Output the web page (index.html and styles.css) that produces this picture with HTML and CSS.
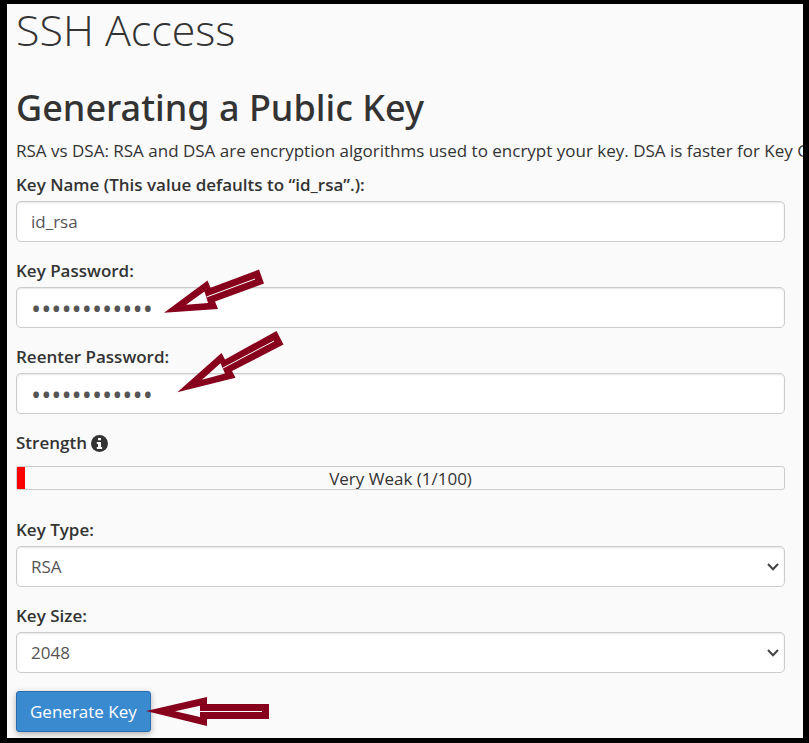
FILE: index.html
```html
<!DOCTYPE html>
<html lang="en">
<head>
<meta charset="utf-8">
<title>SSH Access</title>
<link rel="stylesheet" href="styles.css">
</head>
<body>
<main class="page">
  <h1 class="page-title">SSH Access</h1>
  <h2 class="section-title">Generating a Public Key</h2>
  <p class="intro">RSA vs DSA: RSA and DSA are encryption algorithms used to encrypt your key. DSA is faster for Key Ge</p>
  <form class="key-form">
    <div class="field">
      <label for="key-name">Key Name (This value defaults to “id_rsa”.):</label>
      <input class="control" id="key-name" type="text" value="id_rsa">
    </div>
    <div class="field">
      <label for="key-pass">Key Password:</label>
      <input class="control password" id="key-pass" type="password" value="abcdefghijkl">
      <svg class="arrow arrow-pass" viewBox="164 269 101 44" width="101" height="44" aria-hidden="true">
        <path fill-rule="evenodd" d="M164 312.7 207.5 280.5 210.5 287.8 259 269.5 264 283.5 215 301.5 218 309ZM186 304.8 208 303 204.5 291.5Z"/>
        <path class="slit" d="M206.5 297 255 279"/>
      </svg>
    </div>
    <div class="field">
      <label for="key-pass2">Reenter Password:</label>
      <input class="control password" id="key-pass2" type="password" value="abcdefghijkl">
      <svg class="arrow arrow-repeat" viewBox="177 331 107 62" width="107" height="62" aria-hidden="true">
        <path fill-rule="evenodd" d="M177.3 392.3 221.5 353 225 359.5 276.5 331 283.5 344.5 232 371 235.5 377.7ZM202 379.7 225 373.5 220.5 363.3Z"/>
        <path class="slit" d="M223 368 274 341"/>
      </svg>
    </div>
    <div class="field strength">
      <div class="strength-label">Strength
        <svg class="info" viewBox="0 0 17 17" width="17" height="17" aria-hidden="true">
          <circle cx="8.5" cy="8.5" r="8.5"/>
          <path d="M7 3h3v2.300H7zM5.800 7H10v5h1.200v2H5.800v-2H7V9H5.800z"/>
        </svg>
      </div>
      <div class="meter"><div class="meter-fill"></div><span>Very Weak (1/100)</span></div>
    </div>
    <div class="field">
      <label for="key-type">Key Type:</label>
      <div class="select-wrap">
        <select class="control" id="key-type"><option>RSA</option><option>DSA</option></select>
        <svg class="chevron" viewBox="0 0 12 8" width="12" height="8" aria-hidden="true"><path d="M1 1 6 6.300 11 1"/></svg>
      </div>
    </div>
    <div class="field">
      <label for="key-size">Key Size:</label>
      <div class="select-wrap">
        <select class="control" id="key-size"><option>2048</option><option>4096</option></select>
        <svg class="chevron" viewBox="0 0 12 8" width="12" height="8" aria-hidden="true"><path d="M1 1 6 6.300 11 1"/></svg>
      </div>
    </div>
    <div class="actions">
      <button class="submit" type="button">Generate Key</button>
      <svg class="arrow arrow-submit" viewBox="146 697 123 29" width="123" height="29" aria-hidden="true">
        <path fill-rule="evenodd" d="M146 711 207 697V704H269V719H207V726ZM175 711.300 200 717V705.700Z"/>
        <path class="slit" d="M200 711.500H262"/>
      </svg>
    </div>
  </form>
</main>
</body>
</html>
```
FILE: styles.css
```css
* {
  box-sizing: border-box;
}

body {
  margin: 0;
  padding: 4px 6px 5px 7px;
  background: #000;
  color: #333;
  font: 17px/24px "Open Sans", "Noto Sans", sans-serif;
}

.page {
  padding: 0 18px 6px 9px;
  background: #fafafa;
  overflow: hidden;
}

.page-title {
  margin: 0 0 28px;
  font-size: 43px;
  line-height: 52px;
  font-weight: 300;
}

.section-title {
  margin: 0 0 7px;
  font-family: "Noto Sans", "Open Sans", sans-serif;
  font-size: 36px;
  line-height: 48px;
  font-weight: 500;
}

.intro {
  margin: 0 0 10px;
  white-space: nowrap;
}

.field {
  position: relative;
  margin-bottom: 17px;
}

label,
.strength-label {
  display: block;
  margin-bottom: 4px;
  font-weight: 600;
}

.control {
  display: block;
  width: 100%;
  height: 41px;
  margin: 0;
  padding: 0 14px;
  border: 1px solid #ccc;
  border-radius: 5px;
  background: #fff;
  box-shadow: inset 0 1px 2px rgba(0, 0, 0, 0.1);
  color: #555;
  font: inherit;
  appearance: none;
}

.password {
  padding-top: 2px;
  font-size: 27px;
}

.select-wrap {
  position: relative;
}

.chevron {
  position: absolute;
  right: 6px;
  top: 17px;
  fill: none;
  stroke: #444;
  stroke-width: 2;
}

.strength {
  margin-bottom: 28px;
}

.strength-label {
  display: flex;
  align-items: center;
  gap: 4px;
  margin-bottom: 11px;
}

.info {
  fill: #333;
}

.info path {
  fill: #fafafa;
}

.meter {
  display: flex;
  position: relative;
  height: 24px;
  border: 1px solid #ccc;
  border-radius: 3px;
  line-height: 24px;
}

.meter-fill {
  width: 1%;
  background: #f00;
}

.meter span {
  position: absolute;
  inset: 0;
  text-align: center;
}

.actions {
  position: relative;
  margin-top: 18px;
}

.submit {
  display: block;
  height: 41px;
  padding: 0 13px;
  border: 1px solid #2a6cb0;
  border-radius: 3px;
  background: #3a8ad0;
  box-shadow: 0 2px 6px rgba(0, 0, 0, 0.3);
  color: #fff;
  font: inherit;
}

.arrow {
  position: absolute;
  z-index: 1;
  fill: #87001c;
  pointer-events: none;
}

.arrow .slit {
  fill: none;
  stroke: #fff;
  stroke-width: 1;
}

.arrow-pass {
  left: 148px;
  top: 10px;
}

.arrow-repeat {
  left: 161px;
  top: -14px;
}

.arrow-submit {
  left: 130px;
  top: 6px;
}
```
